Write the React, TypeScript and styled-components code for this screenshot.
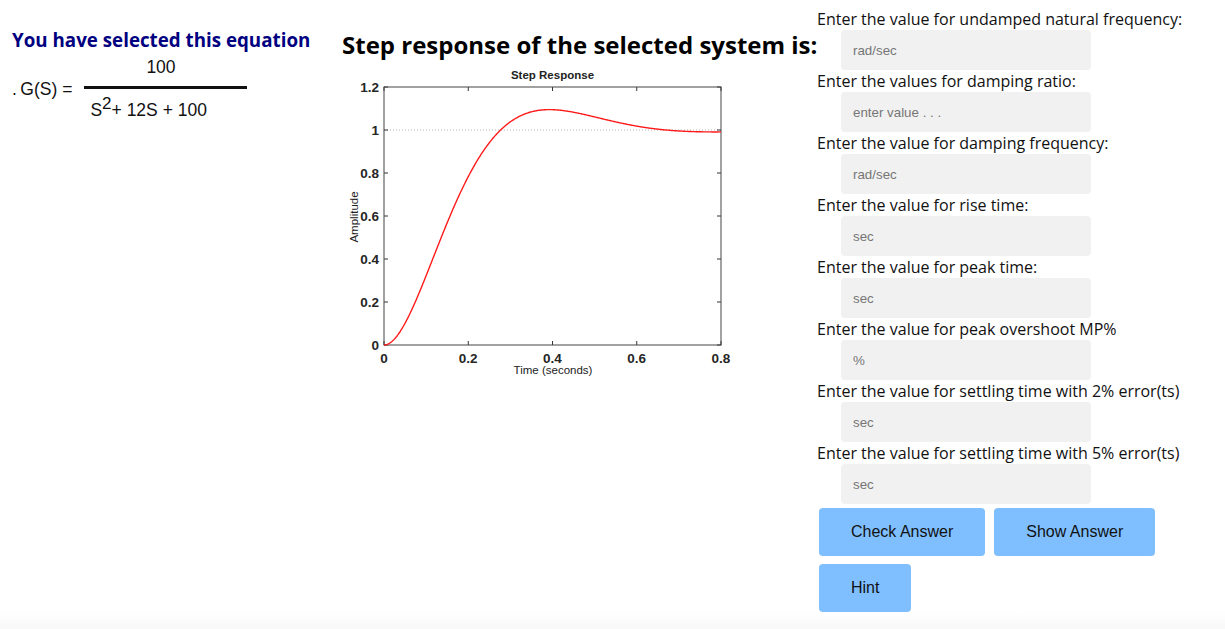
import React from "react";
import styled, { createGlobalStyle } from "styled-components";

const Global = createGlobalStyle`
  html {
    min-height: 100%;
    background: linear-gradient(to bottom, #ffffff 0, #ffffff 612px, #f8f8f8 629px);
  }
  body {
    margin: 8px;
    font-family: "Open Sans", "Liberation Sans", sans-serif;
    color: #000;
  }
`;

const Page = styled.div`
  display: flex;
  align-items: flex-start;
  padding-left: 4px;
`;

const EquationColumn = styled.section`
  width: 330px;
  flex: none;
  padding-top: 19px;
`;

const EquationHeading = styled.h2`
  margin: 0;
  font-size: 18.75px;
  line-height: 26px;
  font-weight: 700;
  color: #000080;
  white-space: nowrap;
`;

const Equation = styled.div`
  display: flex;
  align-items: center;
  margin-top: 4px;
  font-family: "Liberation Sans", Arial, sans-serif;
  font-size: 17.5px;
  color: #111;
`;

const Prefix = styled.span`
  margin-right: 12px;
  line-height: 20px;
  white-space: nowrap;
`;

const Fraction = styled.div`
  display: flex;
  flex-direction: column;
  width: 163px;
`;

const Numerator = styled.div`
  line-height: 20px;
  padding-left: 62px;
  margin-bottom: 9px;
`;

const Bar = styled.div`
  height: 3px;
  background: #111;
`;

const Denominator = styled.div`
  line-height: 20px;
  padding-top: 11px;
  padding-left: 6px;
  white-space: nowrap;
`;

const Sup = styled.span`
  font-size: 17px;
  line-height: 0;
  vertical-align: 7px;
`;

const ChartColumn = styled.section`
  width: 475px;
  flex: none;
  padding-top: 21px;
`;

const ChartHeading = styled.h2`
  margin: 0;
  font-size: 24px;
  line-height: 32px;
  font-weight: 700;
  white-space: nowrap;
`;

const ChartSvg = styled.svg`
  display: block;
  font-family: "Liberation Sans", Arial, sans-serif;
`;

const FormColumn = styled.section`
  display: flex;
  flex-direction: column;
  flex: none;
`;

const Field = styled.div`
  display: flex;
  flex-direction: column;
`;

const Label = styled.label`
  font-size: 16px;
  line-height: 22px;
  color: #111;
  white-space: nowrap;
`;

const Input = styled.input`
  box-sizing: border-box;
  width: 250px;
  height: 40px;
  margin-left: 24px;
  padding: 0 12px;
  border: none;
  border-radius: 4px;
  background: #f1f1f1;
  font-family: "Liberation Sans", Arial, sans-serif;
  font-size: 13.333px;
  outline: none;
  &::placeholder {
    color: #767676;
  }
`;

const ButtonRow = styled.div<{ $top: number }>`
  display: flex;
  gap: 9px;
  margin-left: 2px;
  margin-top: ${(p) => p.$top}px;
`;

const Button = styled.button`
  height: 48px;
  padding: 0 32px;
  border: none;
  border-radius: 4px;
  background: #7fbfff;
  color: #111;
  font-family: "Liberation Sans", Arial, sans-serif;
  font-size: 16px;
  cursor: pointer;
`;

const fields = [
  ["Enter the value for undamped natural frequency:", "rad/sec"],
  ["Enter the values for damping ratio:", "enter value . . ."],
  ["Enter the value for damping frequency:", "rad/sec"],
  ["Enter the value for rise time:", "sec"],
  ["Enter the value for peak time:", "sec"],
  ["Enter the value for peak overshoot MP%", "%"],
  ["Enter the value for settling time with 2% error(ts)", "sec"],
  ["Enter the value for settling time with 5% error(ts)", "sec"],
];

// chart geometry
const X0 = 42;
const X1 = 379;
const Y0 = 26;
const Y1 = 284;
const sx = (t: number) => X0 + (t / 0.8) * (X1 - X0);
const sy = (v: number) => Y1 - (v / 1.2) * (Y1 - Y0);

const curve = (() => {
  const pts: string[] = [];
  for (let i = 0; i <= 400; i++) {
    const t = (i / 400) * 0.8;
    const y = 1 - Math.exp(-6 * t) * (Math.cos(8 * t) + 0.75 * Math.sin(8 * t));
    pts.push(`${sx(t).toFixed(2)},${sy(y).toFixed(2)}`);
  }
  return pts.join(" ");
})();

const yTicks = [0, 0.2, 0.4, 0.6, 0.8, 1, 1.2];
const xTicks = [0, 0.2, 0.4, 0.6, 0.8];
const fmt = (v: number) => (v === 0 || v === 1 ? String(v) : v.toFixed(1));

function StepChart() {
  return (
    <ChartSvg width={420} height={330} viewBox="0 0 420 330">
      <text x={210.5} y={18} textAnchor="middle" fontSize={11.5} fontWeight={700} fill="#222">
        Step Response
      </text>
      <line x1={X0} y1={sy(1)} x2={X1} y2={sy(1)} stroke="#b5b5b5" strokeWidth={1} strokeDasharray="1 2" />
      {yTicks.map((v) => (
        <g key={"y" + v}>
          <line x1={X0} y1={sy(v)} x2={X0 + 4} y2={sy(v)} stroke="#333" />
          <line x1={X1} y1={sy(v)} x2={X1 - 4} y2={sy(v)} stroke="#333" />
          <text x={37} y={sy(v) + 5} textAnchor="end" fontSize={13.5} fontWeight={700} fill="#262626">
            {fmt(v)}
          </text>
        </g>
      ))}
      {xTicks.map((v) => (
        <g key={"x" + v}>
          <line x1={sx(v)} y1={Y1} x2={sx(v)} y2={Y1 - 4} stroke="#333" />
          <line x1={sx(v)} y1={Y0} x2={sx(v)} y2={Y0 + 4} stroke="#333" />
          <text x={sx(v)} y={302} textAnchor="middle" fontSize={13.5} fontWeight={700} fill="#262626">
            {fmt(v)}
          </text>
        </g>
      ))}
      <rect x={X0} y={Y0} width={X1 - X0} height={Y1 - Y0} fill="none" stroke="#444" strokeWidth={1} />
      <polyline points={curve} fill="none" stroke="#ff1a1a" strokeWidth={1.4} />
      <text x={211} y={313} textAnchor="middle" fontSize={11.5} fill="#222">
        Time (seconds)
      </text>
      <text
        x={0}
        y={0}
        transform="translate(16 156) rotate(-90)"
        textAnchor="middle"
        fontSize={11.5}
        fill="#222"
      >
        Amplitude
      </text>
    </ChartSvg>
  );
}

export default function App() {
  return (
    <>
      <Global />
      <Page>
        <EquationColumn>
          <EquationHeading>You have selected this equation</EquationHeading>
          <Equation>
            <Prefix>.&thinsp;G(S) =</Prefix>
            <Fraction>
              <Numerator>100</Numerator>
              <Bar />
              <Denominator>
                S<Sup>2</Sup>+ 12S + 100
              </Denominator>
            </Fraction>
          </Equation>
        </EquationColumn>
        <ChartColumn>
          <ChartHeading>Step response of the selected system is:</ChartHeading>
          <StepChart />
        </ChartColumn>
        <FormColumn>
          {fields.map(([label, ph], i) => (
            <Field key={i}>
              <Label htmlFor={"f" + i}>{label}</Label>
              <Input id={"f" + i} placeholder={ph} />
            </Field>
          ))}
          <ButtonRow $top={4}>
            <Button>Check Answer</Button>
            <Button>Show Answer</Button>
          </ButtonRow>
          <ButtonRow $top={8}>
            <Button>Hint</Button>
          </ButtonRow>
        </FormColumn>
      </Page>
    </>
  );
}
